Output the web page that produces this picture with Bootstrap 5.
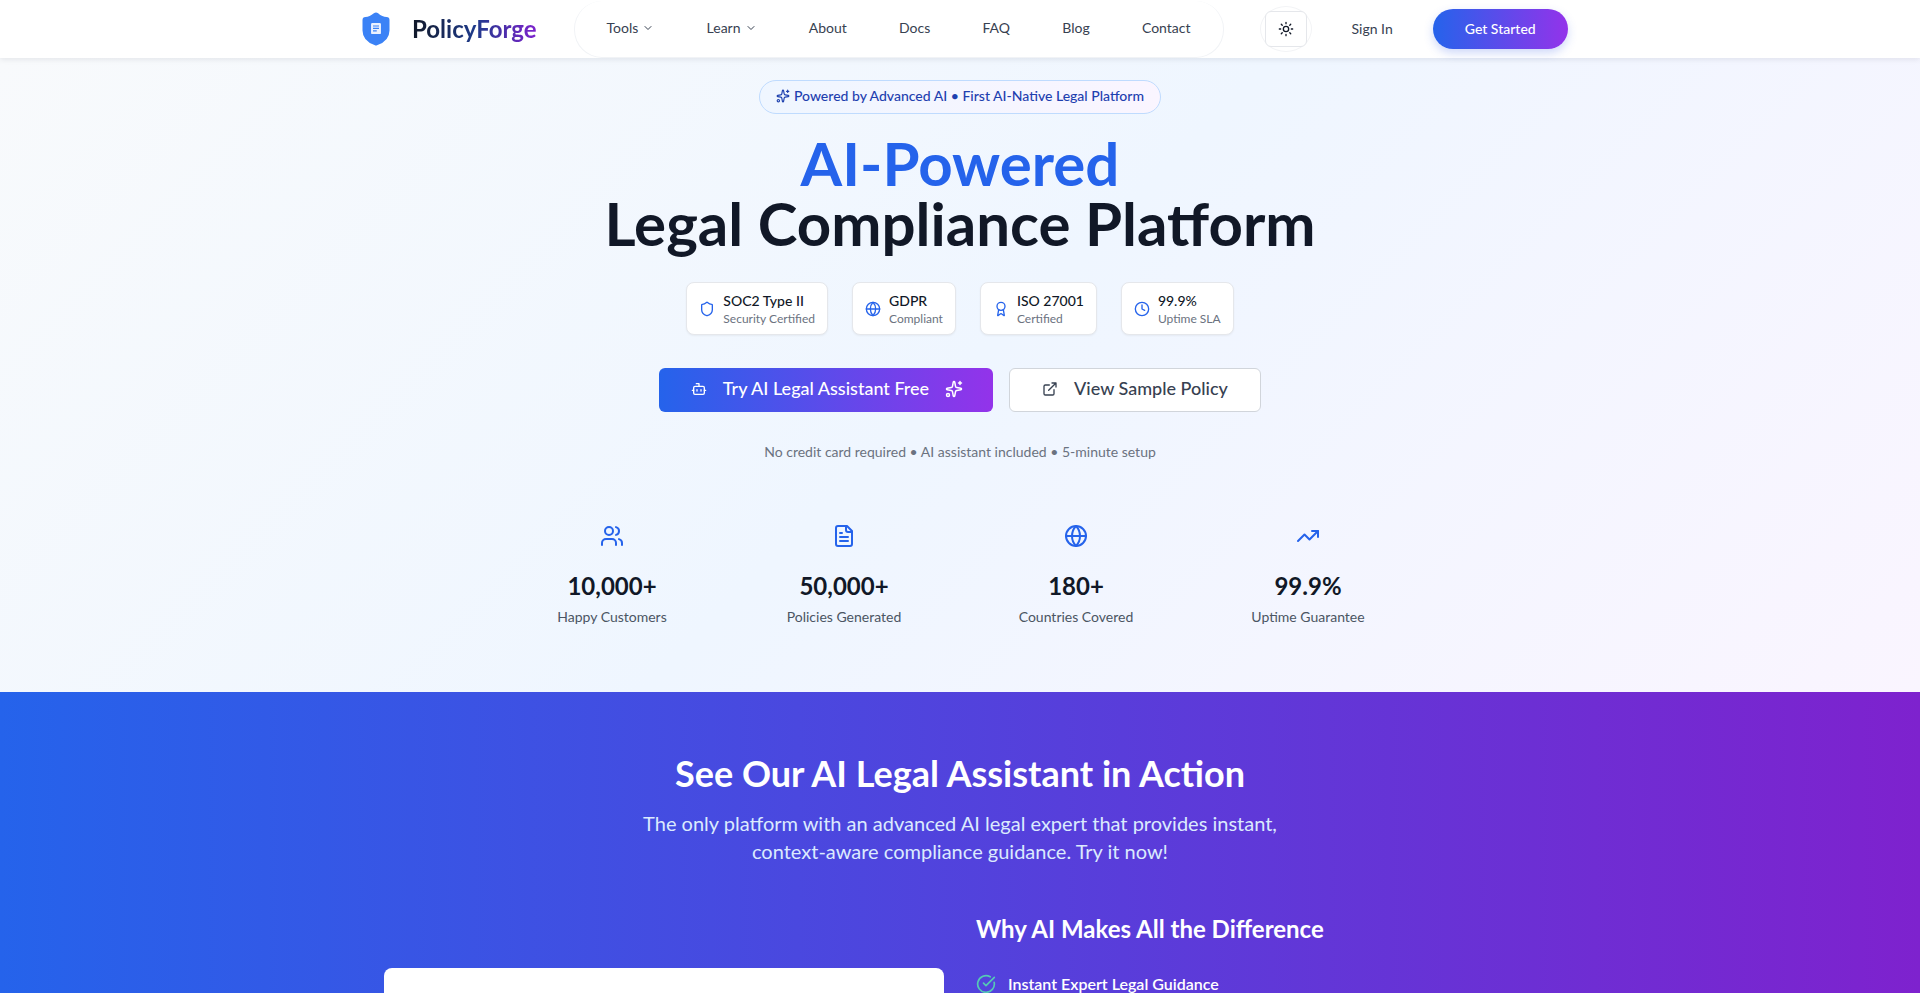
<!DOCTYPE html>
<html lang="en">
<head>
    <meta charset="UTF-8">
    <meta name="viewport" content="width=device-width, initial-scale=1.0">
    <title>PolicyForge</title>
    <link href="https://cdn.jsdelivr.net/npm/bootstrap@5.3.0/dist/css/bootstrap.min.css" rel="stylesheet">
    <style>
        html, body { height: 993px; overflow: hidden; }
        body { font-family: Lato, "Liberation Sans", sans-serif; color: #111827; background: #fff; }
        .ic { fill: none; stroke: currentColor; stroke-width: 2; stroke-linecap: round; stroke-linejoin: round; flex-shrink: 0; }
        .pf-top { height: 58px; background: #fff; box-shadow: 0 1px 6px rgba(15, 23, 42, .1); position: relative; z-index: 2; }
        .pf-wrap { width: 1280px; }
        .pf-logo { margin-left: 38px; }
        .pf-logo-text { margin-left: 18px; font-size: 24px; font-weight: 700; line-height: 32px; background: linear-gradient(90deg, #111827 0%, #1e3a8a 50%, #7e22ce 100%); -webkit-background-clip: text; background-clip: text; color: transparent; }
        .pf-links { height: 57px; border: 1px solid #f1f3f6; border-top: 0; border-radius: 28px; padding: 0 8px 2px; width: 650px; margin-left: 37px; }
        .pf-links a { font-size: 14px; color: #374151; text-decoration: none; padding: 0 24px; display: flex; align-items: center; gap: 4px; }
        .pf-theme { width: 52px; height: 46px; border-radius: 50%; border: 1px solid #f3f4f6; margin-left: 36px; }
        .pf-theme span { width: 42px; height: 36px; background: #fff; border: 1px solid #e5e7eb; border-radius: 6px; color: #111827; }
        .pf-signin { font-size: 14px; color: #374151; text-decoration: none; margin: 0 40px 2px 40px; }
        .pf-start { width: 135px; height: 40px; padding-bottom: 3px; border-radius: 20px; font-size: 14px; font-weight: 500; color: #fff; border: 0; background: linear-gradient(90deg, #2563eb, #9333ea); box-shadow: 0 4px 10px rgba(59, 100, 230, .25); }
        .pf-hero { height: 634px; padding-top: 22px; background: linear-gradient(135deg, #f8fafc 0%, #eff6ff 50%, #faf5ff 100%); }
        .pf-pill { height: 34px; width: 402px; padding-bottom: 3px; font-size: 14px; font-weight: 500; color: #1e40af; border: 1px solid #bfdbfe; border-radius: 17px; background: linear-gradient(90deg, #eff6ff, #faf5ff); }
        .pf-title { font-size: 60px; line-height: 60px; font-weight: 700; margin: 19px 0 0; color: #111827; }
        .pf-title span { color: #2563eb; display: block; }
        .pf-trust { margin-top: 29px; gap: 24px; }
        .pf-chip { height: 53px; background: #fff; border: 1px solid #e5e7eb; border-radius: 8px; padding: 0 12px; gap: 8px; color: #2563eb; box-shadow: 0 1px 2px rgba(0, 0, 0, .05); }
        .pf-chip b { display: block; font-size: 14px; font-weight: 500; line-height: 20px; color: #111827; }
        .pf-chip small { display: block; font-size: 12px; line-height: 16px; color: #6b7280; }
        .pf-cta { margin-top: 33px; gap: 16px; }
        .pf-cta .btn { height: 44px; font-size: 18px; font-weight: 500; border-radius: 6px; gap: 16px; padding: 0 0 3px; }
        .pf-try { width: 334px; color: #fff; border: 0; background: linear-gradient(90deg, #2563eb, #9333ea); }
        .pf-try:hover { color: #fff; }
        .pf-try .ic:last-child { margin-right: -2px; }
        .pf-view { width: 252px; color: #374151; background: #fff; border: 1px solid #d1d5db; }
        .pf-note { margin: 30px 0 0; font-size: 14px; line-height: 20px; color: #6b7280; }
        .pf-stats { width: 896px; margin-top: 60px; grid-template-columns: repeat(4, 1fr); gap: 32px; }
        .pf-stat-ic { color: #2563eb; height: 24px; }
        .pf-stat-num { font-size: 24px; font-weight: 700; line-height: 32px; margin-top: 22px; color: #111827; }
        .pf-stat-lbl { font-size: 14px; line-height: 20px; margin-top: 5px; color: #4b5563; }
        .pf-band { height: 400px; padding-top: 59px; color: #fff; background: linear-gradient(90deg, #2563eb, #7e22ce); }
        .pf-band h2 { font-size: 36px; line-height: 44px; font-weight: 700; margin: 0; }
        .pf-lead { font-size: 20px; line-height: 28px; width: 672px; margin: 14px auto 0; color: #dbeafe; }
        .pf-split { width: 1152px; margin-top: 48px; grid-template-columns: 560px 560px; gap: 32px; }
        .pf-demo { height: 200px; margin-top: 55px; background: #fff; border-radius: 8px; }
        .pf-split h3 { font-size: 24px; line-height: 32px; font-weight: 700; margin: 0 0 27px; }
        .pf-why { font-size: 16px; font-weight: 600; line-height: 24px; gap: 12px; }
        .pf-why svg { color: #55c9b5; }
    </style>
</head>
<body>
    <svg width="0" height="0" class="d-block">
        <defs>
            <symbol id="chev" viewBox="0 0 24 24"><path d="m6 9 6 6 6-6"/></symbol>
            <symbol id="sun" viewBox="0 0 24 24"><circle cx="12" cy="12" r="4"/><path d="M12 2v2M12 20v2m-7.07-17.07 1.41 1.41m11.32 11.32 1.41 1.41M2 12h2M20 12h2M6.34 17.66l-1.41 1.41M19.07 4.93l-1.41 1.41"/></symbol>
            <symbol id="spark" viewBox="0 0 24 24"><path d="M11.017 2.814a1 1 0 0 1 1.966 0l1.051 5.558a2 2 0 0 0 1.594 1.594l5.558 1.051a1 1 0 0 1 0 1.966l-5.558 1.051a2 2 0 0 0-1.594 1.594l-1.051 5.558a1 1 0 0 1-1.966 0l-1.051-5.558a2 2 0 0 0-1.594-1.594l-5.558-1.051a1 1 0 0 1 0-1.966l5.558-1.051a2 2 0 0 0 1.594-1.594z"/><path d="M20 2v4M22 4h-4"/><circle cx="4" cy="20" r="2"/></symbol>
            <symbol id="shield" viewBox="0 0 24 24"><path d="M20 13c0 5-3.5 7.5-7.66 8.95a1 1 0 0 1-.67-.01C7.5 20.5 4 18 4 13V6a1 1 0 0 1 1-1c2 0 4.5-1.2 6.24-2.72a1.17 1.17 0 0 1 1.52 0C14.51 3.81 17 5 19 5a1 1 0 0 1 1 1z"/></symbol>
            <symbol id="globe" viewBox="0 0 24 24"><circle cx="12" cy="12" r="10"/><path d="M12 2a14.5 14.5 0 0 0 0 20 14.5 14.5 0 0 0 0-20"/><path d="M2 12h20"/></symbol>
            <symbol id="award" viewBox="0 0 24 24"><path d="m15.477 12.89 1.515 8.526a.5.5 0 0 1-.81.47l-3.58-2.687a1 1 0 0 0-1.197 0l-3.586 2.686a.5.5 0 0 1-.81-.469l1.514-8.526"/><circle cx="12" cy="8" r="6"/></symbol>
            <symbol id="clock" viewBox="0 0 24 24"><circle cx="12" cy="12" r="10"/><path d="M12 6v6l4 2"/></symbol>
            <symbol id="bot" viewBox="0 0 24 24"><path d="M12 8V4H8"/><rect x="4" y="8" width="16" height="12" rx="2"/><path d="M2 14h2M20 14h2M15 13v2M9 13v2"/></symbol>
            <symbol id="ext" viewBox="0 0 24 24"><path d="M15 3h6v6M10 14 21 3M18 13v6a2 2 0 0 1-2 2H5a2 2 0 0 1-2-2V8a2 2 0 0 1 2-2h6"/></symbol>
            <symbol id="users" viewBox="0 0 24 24"><path d="M16 21v-2a4 4 0 0 0-4-4H6a4 4 0 0 0-4 4v2"/><circle cx="9" cy="7" r="4"/><path d="M22 21v-2a4 4 0 0 0-3-3.87M16 3.13a4 4 0 0 1 0 7.75"/></symbol>
            <symbol id="file" viewBox="0 0 24 24"><path d="M15 2H6a2 2 0 0 0-2 2v16a2 2 0 0 0 2 2h12a2 2 0 0 0 2-2V7Z"/><path d="M14 2v4a2 2 0 0 0 2 2h4M10 9H8M16 13H8M16 17H8"/></symbol>
            <symbol id="trend" viewBox="0 0 24 24"><path d="M22 7l-8.5 8.5-5-5L2 17"/><path d="M16 7h6v6"/></symbol>
            <symbol id="check" viewBox="0 0 24 24"><path d="M21.801 10A10 10 0 1 1 17 3.335"/><path d="m9 11 3 3L22 4"/></symbol>
        </defs>
    </svg>

    <nav class="pf-top d-flex justify-content-center">
        <div class="pf-wrap d-flex align-items-center">
            <div class="pf-logo d-flex align-items-center">
                <svg width="36" height="36" viewBox="0 0 24 24">
                    <path fill="#3b82f6" stroke="#3b82f6" stroke-width="2" stroke-linejoin="round" d="M20 13c0 5-3.5 7.5-7.66 8.95a1 1 0 0 1-.67-.01C7.5 20.5 4 18 4 13V6a1 1 0 0 1 1-1c2 0 4.5-1.2 6.24-2.72a1.17 1.17 0 0 1 1.52 0C14.51 3.81 17 5 19 5a1 1 0 0 1 1 1z"/>
                    <rect x="8.7" y="8" width="6.6" height="7.4" rx=".8" fill="#eaf1fe"/>
                    <path stroke="#3b82f6" stroke-width=".8" d="M10 10h4M10 11.6h4M10 13.2h2.5"/>
                </svg>
                <span class="pf-logo-text">PolicyForge</span>
            </div>
            <div class="pf-links d-flex align-items-center justify-content-between">
                <a href="#">Tools <svg class="ic" width="12" height="12"><use href="#chev"/></svg></a>
                <a href="#">Learn <svg class="ic" width="12" height="12"><use href="#chev"/></svg></a>
                <a href="#">About</a>
                <a href="#">Docs</a>
                <a href="#">FAQ</a>
                <a href="#">Blog</a>
                <a href="#">Contact</a>
            </div>
            <div class="pf-theme d-flex align-items-center justify-content-center">
                <span class="d-flex align-items-center justify-content-center"><svg class="ic" width="16" height="16"><use href="#sun"/></svg></span>
            </div>
            <a href="#" class="pf-signin">Sign In</a>
            <button class="pf-start" type="button">Get Started</button>
        </div>
    </nav>

    <section class="pf-hero d-flex flex-column align-items-center text-center">
        <div class="pf-pill d-flex align-items-center justify-content-center gap-1">
            <svg class="ic" width="14" height="14"><use href="#spark"/></svg>
            <span>Powered by Advanced AI • First AI-Native Legal Platform</span>
        </div>
        <h1 class="pf-title"><span>AI-Powered</span>Legal Compliance Platform</h1>
        <div class="pf-trust d-flex">
            <div class="pf-chip d-flex align-items-center text-start">
                <svg class="ic" width="16" height="16"><use href="#shield"/></svg>
                <div><b>SOC2 Type II</b><small>Security Certified</small></div>
            </div>
            <div class="pf-chip d-flex align-items-center text-start">
                <svg class="ic" width="16" height="16"><use href="#globe"/></svg>
                <div><b>GDPR</b><small>Compliant</small></div>
            </div>
            <div class="pf-chip d-flex align-items-center text-start">
                <svg class="ic" width="16" height="16"><use href="#award"/></svg>
                <div><b>ISO 27001</b><small>Certified</small></div>
            </div>
            <div class="pf-chip d-flex align-items-center text-start">
                <svg class="ic" width="16" height="16"><use href="#clock"/></svg>
                <div><b>99.9%</b><small>Uptime SLA</small></div>
            </div>
        </div>
        <div class="pf-cta d-flex">
            <a href="#" class="btn pf-try d-flex align-items-center justify-content-center">
                <svg class="ic" width="16" height="16"><use href="#bot"/></svg>
                Try AI Legal Assistant Free
                <svg class="ic" width="18" height="18"><use href="#spark"/></svg>
            </a>
            <a href="#" class="btn pf-view d-flex align-items-center justify-content-center">
                <svg class="ic" width="16" height="16"><use href="#ext"/></svg>
                View Sample Policy
            </a>
        </div>
        <p class="pf-note">No credit card required • AI assistant included • 5-minute setup</p>
        <div class="pf-stats d-grid">
            <div>
                <svg class="ic pf-stat-ic" width="24" height="24"><use href="#users"/></svg>
                <div class="pf-stat-num">10,000+</div>
                <div class="pf-stat-lbl">Happy Customers</div>
            </div>
            <div>
                <svg class="ic pf-stat-ic" width="24" height="24"><use href="#file"/></svg>
                <div class="pf-stat-num">50,000+</div>
                <div class="pf-stat-lbl">Policies Generated</div>
            </div>
            <div>
                <svg class="ic pf-stat-ic" width="24" height="24"><use href="#globe"/></svg>
                <div class="pf-stat-num">180+</div>
                <div class="pf-stat-lbl">Countries Covered</div>
            </div>
            <div>
                <svg class="ic pf-stat-ic" width="24" height="24"><use href="#trend"/></svg>
                <div class="pf-stat-num">99.9%</div>
                <div class="pf-stat-lbl">Uptime Guarantee</div>
            </div>
        </div>
    </section>

    <section class="pf-band text-center d-flex flex-column align-items-center">
        <h2>See Our AI Legal Assistant in Action</h2>
        <p class="pf-lead">The only platform with an advanced AI legal expert that provides instant, context-aware compliance guidance. Try it now!</p>
        <div class="pf-split d-grid text-start">
            <div class="pf-demo"></div>
            <div>
                <h3>Why AI Makes All the Difference</h3>
                <div class="pf-why d-flex align-items-center">
                    <svg class="ic" width="20" height="20"><use href="#check"/></svg>
                    Instant Expert Legal Guidance
                </div>
            </div>
        </div>
    </section>

    <script src="https://cdn.jsdelivr.net/npm/bootstrap@5.3.0/dist/js/bootstrap.bundle.min.js"></script>
</body>
</html>
